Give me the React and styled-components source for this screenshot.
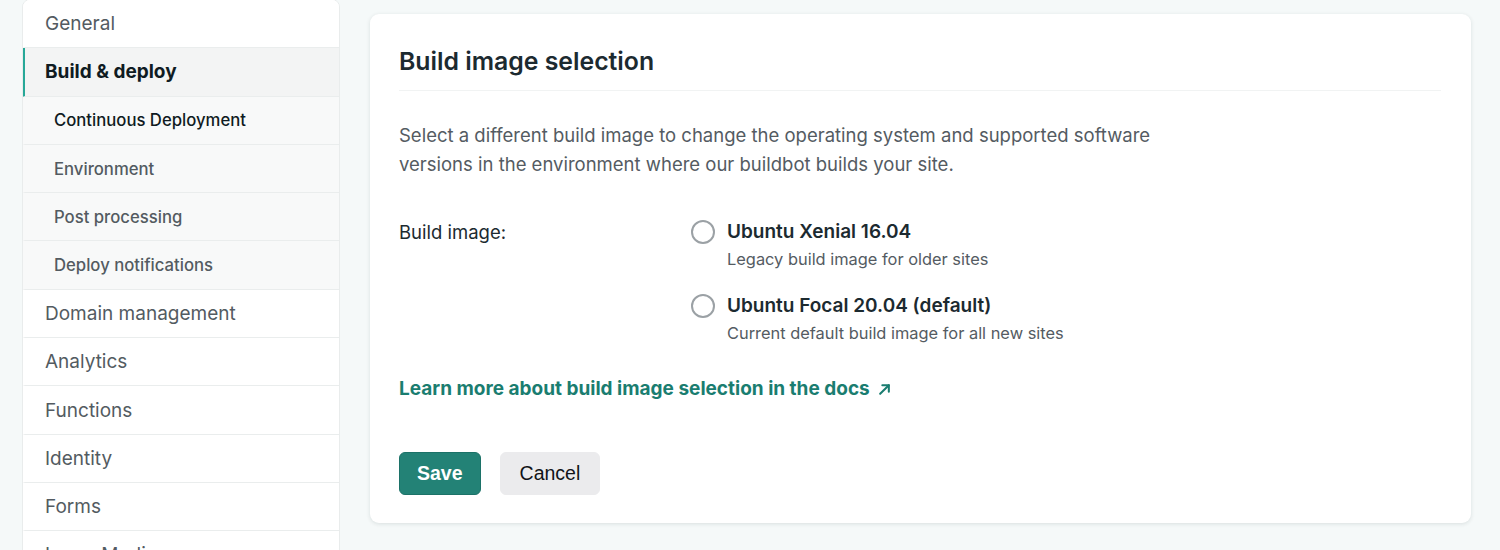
import React from 'react';
import styled, { createGlobalStyle } from 'styled-components';

const GlobalStyle = createGlobalStyle`
    body {
        margin: 0;
        background-color: #f5f9f9;
        font-family: Inter, "Noto Sans", sans-serif;
        -webkit-font-smoothing: antialiased;
    }
`;

const Page = styled.div`
    display: flex;
    align-items: flex-start;
    gap: 30px;
    padding: 0 29px 0 22px;
    height: 550px;
    overflow: hidden;
`;

const Sidebar = styled.nav`
    box-sizing: border-box;
    width: 318px;
    flex-shrink: 0;
    margin-top: -1px;
    background-color: #ffffff;
    border: 1px solid #e9ecec;
    border-radius: 8px 8px 0 0;
    overflow: hidden;
`;

const NavItem = styled.div`
    box-sizing: border-box;
    height: 48.3px;
    display: flex;
    align-items: center;
    padding-left: ${p => (p.$sub ? '29px' : '20px')};
    border-bottom: 1px solid #eaeded;
    border-left: 3px solid ${p => (p.$active ? '#27a898' : 'transparent')};
    margin-left: -1px;
    background-color: ${p => (p.$active ? '#f3f4f4' : p.$sub ? '#f8f9f9' : '#ffffff')};
    color: ${p => (p.$active || p.$current ? '#0f1b22' : '#535b61')};
    font-size: ${p => (p.$sub ? '16.7px' : '19px')};
    font-weight: ${p => (p.$active ? 700 : p.$sub ? 500 : 400)};
    white-space: nowrap;
`;

const Card = styled.section`
    flex: 1;
    margin-top: 14px;
    background-color: #ffffff;
    border-radius: 9px;
    box-shadow: 0 1px 4px rgba(20, 40, 40, 0.12);
    padding: 30px 30px 28px 29px;
`;

const Title = styled.h2`
    margin: 0;
    font-size: 24.8px;
    line-height: 34px;
    font-weight: 600;
    color: #1c2a30;
    padding-bottom: 12px;
    border-bottom: 1px solid #f1f3f3;
`;

const Description = styled.p`
    margin: 30px 0 0;
    max-width: 780px;
    font-size: 18.5px;
    line-height: 29px;
    color: #545b62;
`;

const FieldRow = styled.div`
    display: grid;
    grid-template-columns: 292px 1fr;
    margin-top: 40px;
`;

const FieldLabel = styled.div`
    font-size: 18.5px;
    line-height: 26px;
    color: #1c2a30;
`;

const Options = styled.div`
    display: flex;
    flex-direction: column;
    gap: 22px;
`;

const Option = styled.label`
    display: flex;
    gap: 12px;
`;

const Radio = styled.span`
    box-sizing: border-box;
    width: 24px;
    height: 24px;
    border-radius: 50%;
    border: 2px solid #9ba1a5;
    flex-shrink: 0;
    margin-top: 1px;
`;

const OptionText = styled.div`
    display: flex;
    flex-direction: column;
    gap: 2px;
`;

const OptionTitle = styled.span`
    font-size: 19px;
    line-height: 26px;
    font-weight: 600;
    color: #1c2a30;
    white-space: nowrap;
`;

const OptionHint = styled.span`
    font-size: 16.4px;
    line-height: 24px;
    color: #545b62;
    white-space: nowrap;
`;

const DocsLink = styled.a`
    display: inline-flex;
    align-items: center;
    gap: 8px;
    margin-top: 31px;
    font-size: 19px;
    line-height: 26px;
    font-weight: 700;
    color: #1a7d70;
    text-decoration: none;
    white-space: nowrap;
`;

const Actions = styled.div`
    display: flex;
    gap: 19px;
    margin-top: 50px;
`;

const Button = styled.button`
    height: 43px;
    padding: 0 ${p => (p.$primary ? '17px' : '19px')};
    border-radius: 6px;
    border: 1px solid ${p => (p.$primary ? '#1c7268' : '#ebebed')};
    background-color: ${p => (p.$primary ? '#238276' : '#ebebed')};
    color: ${p => (p.$primary ? '#ffffff' : '#111418')};
    font-family: "Liberation Sans", Arial, sans-serif;
    font-size: 19.5px;
    font-weight: ${p => (p.$primary ? 700 : 400)};
`;

const navItems = [
    { label: 'General' },
    { label: 'Build & deploy', active: true },
    { label: 'Continuous Deployment', sub: true, current: true },
    { label: 'Environment', sub: true },
    { label: 'Post processing', sub: true },
    { label: 'Deploy notifications', sub: true },
    { label: 'Domain management' },
    { label: 'Analytics' },
    { label: 'Functions' },
    { label: 'Identity' },
    { label: 'Forms' },
    { label: 'Large Media' },
];

const images = [
    { name: 'Ubuntu Xenial 16.04', hint: 'Legacy build image for older sites' },
    { name: 'Ubuntu Focal 20.04 (default)', hint: 'Current default build image for all new sites' },
];

const ArrowIcon = () => (
    <svg width="13" height="13" viewBox="0 0 12 12" fill="none" stroke="currentColor" strokeWidth="1.9" strokeLinecap="round" strokeLinejoin="round">
        <path d="M2 10 L10 2" />
        <path d="M4 2 H10 V8" />
    </svg>
);

export default function App() {
    return (
        <>
            <GlobalStyle />
            <Page>
                <Sidebar>
                    {navItems.map(item => (
                        <NavItem key={item.label} $sub={item.sub} $active={item.active} $current={item.current}>
                            {item.label}
                        </NavItem>
                    ))}
                </Sidebar>
                <Card>
                    <Title>Build image selection</Title>
                    <Description>
                        Select a different build image to change the operating system and supported software
                        versions in the environment where our buildbot builds your site.
                    </Description>
                    <FieldRow>
                        <FieldLabel>Build image:</FieldLabel>
                        <Options>
                            {images.map(img => (
                                <Option key={img.name}>
                                    <Radio />
                                    <OptionText>
                                        <OptionTitle>{img.name}</OptionTitle>
                                        <OptionHint>{img.hint}</OptionHint>
                                    </OptionText>
                                </Option>
                            ))}
                        </Options>
                    </FieldRow>
                    <DocsLink href="#">
                        Learn more about build image selection in the docs
                        <ArrowIcon />
                    </DocsLink>
                    <Actions>
                        <Button $primary>Save</Button>
                        <Button>Cancel</Button>
                    </Actions>
                </Card>
            </Page>
        </>
    );
}
